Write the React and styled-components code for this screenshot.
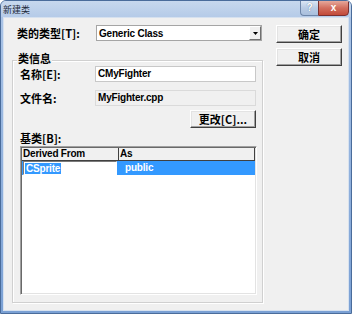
import React from "react"
import styled, { createGlobalStyle } from "styled-components"

const GlobalStyle = createGlobalStyle`
  html, body {
    margin: 0;
    padding: 0;
    background: #ffffff;
  }
  * {
    box-sizing: border-box;
  }
`

const cjk = `"Noto Sans CJK SC", "Liberation Sans", sans-serif`
const latin = `"Liberation Sans", "Noto Sans CJK SC", sans-serif`

function App() {
  return (
    <>
      <GlobalStyle />
      <Window>
        <TitleBar>
          <Title>新建类</Title>
          <CaptionBtns>
            <HelpBtn>?</HelpBtn>
            <CloseBtn>x</CloseBtn>
          </CaptionBtns>
        </TitleBar>
        <Body>
          <LeftCol>
            <TypeRow>
              <Label>类的类型[T]:</Label>
              <Combo>
                <ComboText>Generic Class</ComboText>
                <ComboArrow>
                  <svg width="5" height="3" viewBox="0 0 5 3">
                    <path d="M0 0h5L2.5 3z" fill="#000" />
                  </svg>
                </ComboArrow>
              </Combo>
            </TypeRow>
            <Group>
              <Legend>类信息</Legend>
              <FieldRow>
                <Label>名称[E]:</Label>
                <Field>CMyFighter</Field>
              </FieldRow>
              <FieldRow>
                <Label>文件名:</Label>
                <Field readOnly>MyFighter.cpp</Field>
              </FieldRow>
              <ChangeRow>
                <PushBtn width="66px">更改[C]...</PushBtn>
              </ChangeRow>
              <Label>基类[B]:</Label>
              <List>
                <HeaderRow>
                  <HeaderCell width="97px">Derived From</HeaderCell>
                  <HeaderCell last>As</HeaderCell>
                </HeaderRow>
                <SelectedRow>
                  <EditCell>
                    <Highlight>CSprite</Highlight>
                  </EditCell>
                  <RowText>public</RowText>
                </SelectedRow>
              </List>
            </Group>
          </LeftCol>
          <RightCol>
            <PushBtn width="66px">确定</PushBtn>
            <PushBtn width="66px">取消</PushBtn>
          </RightCol>
        </Body>
      </Window>
    </>
  )
}

export default App

const Window = styled.div`
  width: 352px;
  height: 314px;
  display: flex;
  flex-direction: column;
  background: linear-gradient(180deg, #b7cde9 0px, #a9c3e6 17px, #7aa0d4 100%);
  border: 1px solid #4a6c9b;
  border-radius: 6px 6px 0 0;
  overflow: hidden;
`
const TitleBar = styled.div`
  height: 16px;
  display: flex;
  flex-direction: row;
  justify-content: space-between;
  align-items: flex-start;
  background: linear-gradient(180deg, #c7d8ee 0%, #b5cbe8 100%);
`
const Title = styled.span`
  margin: 3px 0 0 2px;
  font-family: ${cjk};
  font-size: 9px;
  line-height: 11px;
  color: #1e2a3a;
`
const CaptionBtns = styled.div`
  display: flex;
  flex-direction: row;
  margin-right: 2px;
  margin-top: -1px;
`
const HelpBtn = styled.div`
  width: 18px;
  height: 16px;
  border: 1px solid #6d86a9;
  border-right: none;
  border-radius: 0 0 0 4px;
  background: linear-gradient(180deg, #dbe6f4 0%, #b8cbe4 50%, #a9bfdd 100%);
  font-family: ${latin};
  font-weight: bold;
  font-size: 10px;
  line-height: 14px;
  text-align: center;
  color: #ffffff;
  text-shadow: 0 0 1px #4b6486;
`
const CloseBtn = styled.div`
  width: 31px;
  height: 16px;
  border: 1px solid #7b3030;
  border-radius: 0 0 4px 0;
  background: linear-gradient(180deg, #e6a89b 0%, #d26e5e 50%, #c24a39 100%);
  font-family: ${latin};
  font-weight: bold;
  font-size: 10px;
  line-height: 13px;
  text-align: center;
  color: #ffffff;
`
const Body = styled.div`
  flex: 1;
  margin: 0 2px 2px 2px;
  border: 1px solid #d6e1ef;
  background: #f0f0f0;
  display: flex;
  flex-direction: row;
  align-items: flex-start;
  padding: 7px 0 0 8px;
  gap: 13px;
`
const LeftCol = styled.div`
  width: 251px;
  display: flex;
  flex-direction: column;
`
const TypeRow = styled.div`
  display: flex;
  flex-direction: row;
  justify-content: space-between;
  align-items: center;
  padding-left: 5px;
  padding-right: 1px;
  height: 16px;
`
const Label = styled.span`
  font-family: ${cjk};
  font-weight: bold;
  font-size: 11px;
  line-height: 14px;
  color: #000000;
`
const Combo = styled.div`
  width: 166px;
  height: 16px;
  display: flex;
  flex-direction: row;
  justify-content: space-between;
  align-items: center;
  background: #ffffff;
  border: 1px solid #a5a5a5;
  padding-left: 2px;
`
const ComboText = styled.span`
  font-family: ${latin};
  font-weight: bold;
  font-size: 10px;
  letter-spacing: -0.2px;
  color: #000000;
`
const ComboArrow = styled.div`
  width: 12px;
  height: 14px;
  display: flex;
  align-items: center;
  justify-content: center;
  background: #f0f0f0;
  border-top: 1px solid #ffffff;
  border-left: 1px solid #ffffff;
  border-right: 1px solid #707070;
  border-bottom: 1px solid #707070;
`
const Group = styled.div`
  position: relative;
  margin-top: 19px;
  height: 243px;
  border: 1px solid #d0d0d0;
  box-shadow: inset 1px 1px 0 #ffffff, 1px 1px 0 #ffffff;
  padding: 5px 6px 0 7px;
  display: flex;
  flex-direction: column;
`
const Legend = styled.span`
  position: absolute;
  top: -9px;
  left: 4px;
  padding: 0 1px;
  background: #f0f0f0;
  font-family: ${cjk};
  font-weight: bold;
  font-size: 11px;
  line-height: 12px;
`
const FieldRow = styled.div`
  display: flex;
  flex-direction: row;
  justify-content: space-between;
  align-items: center;
  height: 16px;
  margin-bottom: 8px;
`
const Field = styled.div`
  width: 161px;
  height: 16px;
  padding-left: 2px;
  border: 1px solid ${(p) => (p.readOnly ? "#dadada" : "#c8c8c8")};
  background: ${(p) => (p.readOnly ? "#f0f0f0" : "#ffffff")};
  font-family: ${latin};
  font-weight: bold;
  font-size: 10px;
  letter-spacing: -0.2px;
  line-height: 14px;
  color: #000000;
`
const ChangeRow = styled.div`
  display: flex;
  flex-direction: row;
  justify-content: flex-end;
  margin-top: -4px;
  margin-bottom: 3px;
`
const RightCol = styled.div`
  display: flex;
  flex-direction: column;
  gap: 5px;
`
const PushBtn = styled.div`
  width: ${(p) => p.width};
  height: 18px;
  display: flex;
  align-items: center;
  justify-content: center;
  background: #f0f0f0;
  border-top: 1px solid #ffffff;
  border-left: 1px solid #ffffff;
  border-right: 1px solid #404040;
  border-bottom: 1px solid #404040;
  box-shadow: inset -1px -1px 0 #a0a0a0, inset 1px 1px 0 #e3e3e3;
  font-family: ${cjk};
  font-weight: bold;
  font-size: 11px;
  line-height: 14px;
  color: #000000;
`
const List = styled.div`
  margin-top: 1px;
  width: 237px;
  height: 149px;
  background: #ffffff;
  border-top: 1px solid #a0a0a0;
  border-left: 1px solid #a0a0a0;
  border-right: 1px solid #ffffff;
  border-bottom: 1px solid #ffffff;
  box-shadow: inset 1px 1px 0 #696969, inset -1px -1px 0 #e3e3e3;
  padding: 1px;
  display: flex;
  flex-direction: column;
`
const HeaderRow = styled.div`
  display: flex;
  flex-direction: row;
  height: 13px;
  background: #f0f0f0;
  border-bottom: 1px solid #404040;
`
const HeaderCell = styled.div`
  ${(p) => (p.last ? "flex: 1;" : `width: ${p.width};`)}
  padding-left: 1px;
  border-right: 1px solid #404040;
  font-family: ${latin};
  font-weight: bold;
  font-size: 10px;
  letter-spacing: -0.2px;
  line-height: 12px;
  color: #000000;
`
const SelectedRow = styled.div`
  display: flex;
  flex-direction: row;
  align-items: center;
  height: 14px;
  background: #3399ff;
`
const EditCell = styled.div`
  width: 94px;
  height: 14px;
  margin-left: 1px;
  background: #ffffff;
  border: 1px solid #7a7a7a;
  border-right-color: #ffffff;
  border-bottom-color: #ffffff;
  padding-left: 1px;
  display: flex;
  align-items: center;
`
const Highlight = styled.span`
  background: #3399ff;
  color: #ffffff;
  font-family: ${latin};
  font-weight: bold;
  font-size: 10px;
  letter-spacing: -0.2px;
  line-height: 11px;
  padding: 0 1px;
`
const RowText = styled.span`
  margin-left: 8px;
  color: #ffffff;
  font-family: ${latin};
  font-weight: bold;
  font-size: 10px;
  letter-spacing: -0.2px;
  line-height: 12px;
`
